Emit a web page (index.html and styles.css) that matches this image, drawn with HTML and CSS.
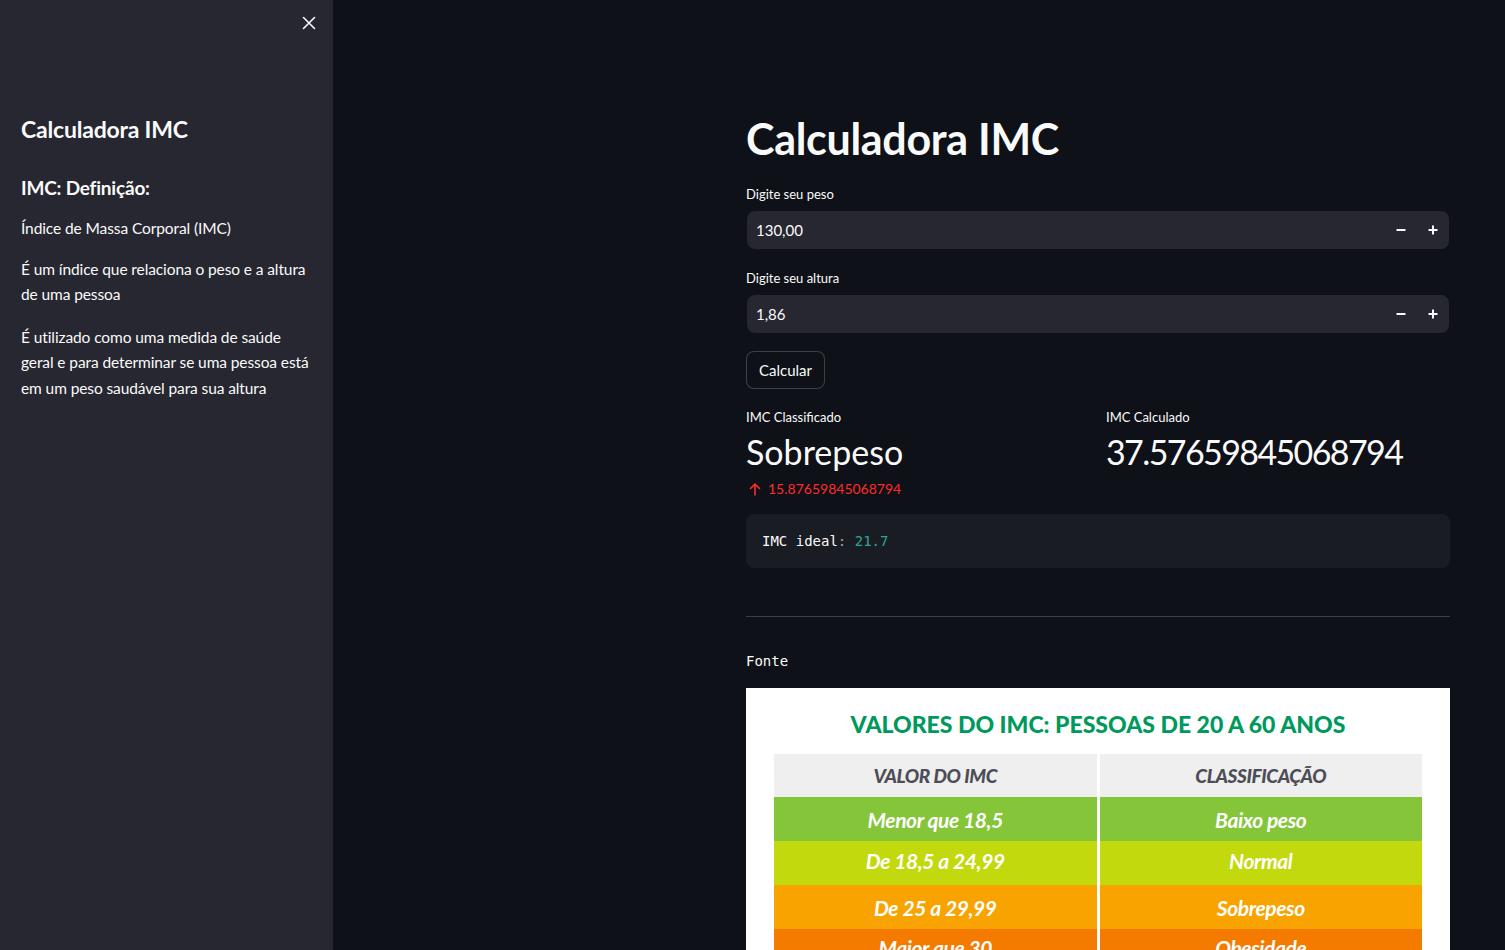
FILE: index.html
```html
<!DOCTYPE html>
<html lang="pt">
<head>
<meta charset="utf-8">
<title>Calculadora IMC</title>
<link rel="stylesheet" href="styles.css">
</head>
<body>
<div class="app">
  <aside class="sidebar">
    <div class="sidebar-top">
      <button class="close" aria-label="Fechar">
        <svg width="14" height="14" viewBox="0 0 14 14"><path d="M1.5 1.5 L12.5 12.5 M12.5 1.5 L1.5 12.5" stroke="#fafafa" stroke-width="1.6" stroke-linecap="round"/></svg>
      </button>
    </div>
    <div class="sidebar-body">
      <h2 class="side-title">Calculadora IMC</h2>
      <h3 class="side-sub">IMC: Definição:</h3>
      <p class="side-p">Índice de Massa Corporal (IMC)</p>
      <p class="side-p">É um índice que relaciona o peso e a altura de uma pessoa</p>
      <p class="side-p">É utilizado como uma medida de saúde geral e para determinar se uma pessoa está em um peso saudável para sua altura</p>
    </div>
  </aside>
  <main class="main">
    <div class="content">
      <h1 class="title">Calculadora IMC</h1>

      <div class="field">
        <label class="label">Digite seu peso</label>
        <div class="input">
          <span class="value">130,00</span>
          <span class="step">
            <span class="stepbtn"><svg width="10" height="10" viewBox="0 0 10 10"><rect x="0.5" y="4" width="9" height="2" fill="#fafafa"/></svg></span>
            <span class="stepbtn"><svg width="10" height="10" viewBox="0 0 10 10"><rect x="0.5" y="4" width="9" height="2" fill="#fafafa"/><rect x="4" y="0.5" width="2" height="9" fill="#fafafa"/></svg></span>
          </span>
        </div>
      </div>

      <div class="field">
        <label class="label">Digite seu altura</label>
        <div class="input">
          <span class="value">1,86</span>
          <span class="step">
            <span class="stepbtn"><svg width="10" height="10" viewBox="0 0 10 10"><rect x="0.5" y="4" width="9" height="2" fill="#fafafa"/></svg></span>
            <span class="stepbtn"><svg width="10" height="10" viewBox="0 0 10 10"><rect x="0.5" y="4" width="9" height="2" fill="#fafafa"/><rect x="4" y="0.5" width="2" height="9" fill="#fafafa"/></svg></span>
          </span>
        </div>
      </div>

      <button class="btn">Calcular</button>

      <div class="metrics">
        <div class="metric">
          <div class="m-label">IMC Classificado</div>
          <div class="m-value">Sobrepeso</div>
          <div class="m-delta">
            <svg width="14" height="14" viewBox="0 0 14 14"><path d="M7 13 V2 M2.5 6.5 L7 2 L11.5 6.5" stroke="#ff2b2b" stroke-width="1.6" fill="none" stroke-linecap="round" stroke-linejoin="round"/></svg>
            <span>15.87659845068794</span>
          </div>
        </div>
        <div class="metric">
          <div class="m-label">IMC Calculado</div>
          <div class="m-value num">37.57659845068794</div>
        </div>
      </div>

      <pre class="code"><span class="c-id">IMC ideal</span><span class="c-p">:</span> <span class="c-num">21.7</span></pre>

      <hr class="rule">

      <div class="fonte">Fonte</div>

      <div class="figure">
        <div class="fig-title">VALORES DO IMC: PESSOAS DE 20 A 60 ANOS</div>
        <div class="table">
          <div class="cell head">VALOR DO IMC</div>
          <div class="cell head">CLASSIFICAÇÃO</div>
          <div class="cell r1">Menor que 18,5</div>
          <div class="cell r1">Baixo peso</div>
          <div class="cell r2">De 18,5 a 24,99</div>
          <div class="cell r2">Normal</div>
          <div class="cell r3">De 25 a 29,99</div>
          <div class="cell r3">Sobrepeso</div>
          <div class="cell r4">Maior que 30</div>
          <div class="cell r4">Obesidade</div>
        </div>
      </div>
    </div>
  </main>
</div>
</body>
</html>
```

FILE: styles.css
```css
* { box-sizing: border-box; }
html, body { margin: 0; padding: 0; height: 100%; }
body {
  background: #0e1117;
  color: #fafafa;
  font-family: Lato, "Noto Sans", sans-serif;
  overflow: hidden;
}
.app { display: flex; height: 950px; }

.sidebar {
  width: 333px;
  flex: 0 0 333px;
  background: #262730;
  display: flex;
  flex-direction: column;
}
.sidebar-top { display: flex; justify-content: flex-end; padding: 16px 17px 0 0; height: 100px; }
.close { background: none; border: 0; padding: 0; width: 14px; height: 14px; cursor: pointer; }
.sidebar-body { padding: 0 21px; }
.side-title { font-size: 23px; font-weight: 700; margin: 15px 0 0; line-height: 28px; letter-spacing: -0.2px; }
.side-sub { font-size: 19px; font-weight: 700; margin: 33px 0 0; line-height: 24px; letter-spacing: -0.2px; }
.side-p { font-size: 15.5px; line-height: 25.6px; margin: 16px 0 0; letter-spacing: -0.1px; }
.side-p + .side-p { margin-top: 15px; }
.side-p + .side-p + .side-p { margin-top: 17px; }

.main { flex: 1; min-width: 0; }
.content { width: 704px; margin-left: 413px; padding-top: 112px; }

.title { font-size: 43px; font-weight: 700; line-height: 54px; margin: 0 0 19px; letter-spacing: -0.3px; }

.field { margin-bottom: 20px; }
.field + .field { margin-bottom: 18px; }
.label { display: block; font-size: 13px; line-height: 18px; margin-bottom: 8px; }
.input {
  height: 38px;
  background: #262730;
  border-radius: 8px;
  display: flex;
  align-items: center;
  padding-left: 9px;
  margin-left: 1px;
  margin-right: 1px;
}
.value { flex: 1; font-size: 15px; }
.step { display: flex; height: 100%; }
.stepbtn { width: 32px; display: flex; align-items: center; justify-content: center; }

.btn {
  margin-top: 0;
  height: 38px;
  padding: 0 12px;
  background: #0e1117;
  color: #fafafa;
  border: 1px solid rgba(250,250,250,0.2);
  border-radius: 8px;
  font-family: inherit;
  font-size: 15px;
}

.metrics { display: grid; grid-template-columns: 1fr 1fr; gap: 16px; margin-top: 19px; }
.m-label { font-size: 13px; line-height: 18px; }
.m-value { font-size: 34px; line-height: 46px; margin-top: 3px; }
.m-value.num { letter-spacing: -1.6px; }
.m-delta { display: flex; align-items: center; gap: 6px; color: #ff2b2b; font-size: 14px; margin-top: 5px; padding-left: 2px; }

.code {
  margin: 17px 0 0;
  background: #1a1c24;
  border-radius: 8px;
  padding: 19px 16px;
  font-family: "DejaVu Sans Mono", "Liberation Mono", monospace;
  font-size: 14px;
  line-height: 16px;
  color: #fafafa;
}
.c-p { color: #a0a0a8; }
.c-num { color: #2ba69a; }

.rule { border: 0; border-top: 1px solid rgba(250,250,250,0.2); margin: 48px 0 0; }

.fonte { font-family: "DejaVu Sans Mono", "Liberation Mono", monospace; font-size: 14px; margin-top: 35px; line-height: 18px; }

.figure { margin-top: 18px; background: #fff; padding: 22px 28px 0; height: 300px; }
.fig-title { text-align: center; color: #00995c; font-weight: 900; font-size: 23px; line-height: 28px; letter-spacing: 0; }
.table { display: grid; grid-template-columns: 1fr 1fr; column-gap: 3px; margin-top: 16px; }
.cell { height: 44px; display: flex; align-items: center; justify-content: center; color: #fff; font-style: italic; font-weight: 700; font-size: 21px; letter-spacing: -0.4px; }
.head { background: #efefef; color: #4d4d57; font-size: 19px; height: 43px; font-weight: 900; }
.r1 { background: #84c53a; }
.r2 { background: #c2d90e; padding-bottom: 5px; }
.r3 { background: #f9a300; }
.r4 { background: #f57a00; padding-bottom: 8px; }
```
